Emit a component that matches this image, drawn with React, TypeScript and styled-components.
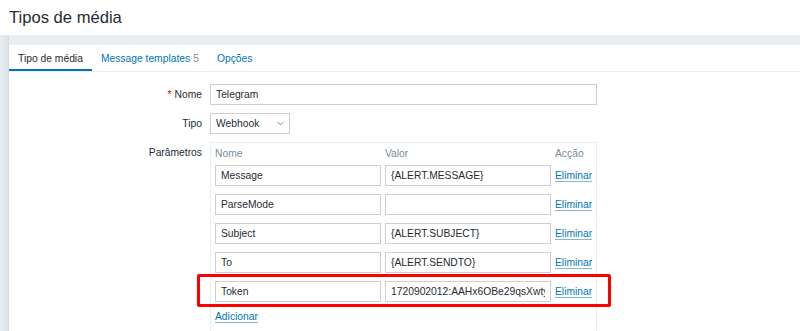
import React from "react";
import styled, { createGlobalStyle, css } from "styled-components";
import { ChevronDown } from "lucide-react";

const GlobalStyle = createGlobalStyle`
  body {
    margin: 0;
    font-family: "Liberation Sans", Arial, sans-serif;
    font-size: 10.3px;
    color: #1f2c33;
    background: #ffffff;
  }
`;

const Page = styled.div`
  height: 331px;
  overflow: hidden;
  display: flex;
  flex-direction: column;
`;

const Header = styled.header`
  height: 35px;
  display: flex;
  align-items: center;
  padding-left: 9px;
  flex-shrink: 0;
`;

const Title = styled.h1`
  margin: 0;
  font-size: 16.6px;
  font-weight: normal;
  color: #1f2c33;
`;

const Body = styled.div`
  flex: 1;
  display: flex;
`;

const Gutter = styled.div`
  width: 9px;
  flex-shrink: 0;
  background: linear-gradient(to right, #e9eef2, #dce3e9 80%, #cfd8df);
`;

const Main = styled.main`
  flex: 1;
  background: #ebeef0;
  padding-top: 10px;
  display: flex;
`;

const Panel = styled.section`
  flex: 1;
  background: #ffffff;
`;

const Tabs = styled.nav`
  display: flex;
  height: 26px;
  border-bottom: 1px solid #ebeef0;
`;

const Tab = styled.a<{ $active?: boolean }>`
  display: flex;
  align-items: center;
  padding: 0 9px;
  color: #0275b8;
  text-decoration: none;
  ${({ $active }) =>
    $active &&
    css`
      color: #1f2c33;
      box-shadow: inset 0 -2px 0 #0275b8;
    `}
`;

const Count = styled.span`
  color: #768d99;
  margin-left: 3px;
`;

const Form = styled.form`
  display: grid;
  grid-template-columns: 193px 387px;
  column-gap: 8px;
  row-gap: 8px;
  padding-top: 12px;
`;

const Label = styled.label`
  text-align: right;
  line-height: 21px;
`;

const Required = styled.span`
  color: #d40000;
  margin-right: 3px;
`;

const TextInput = styled.input`
  box-sizing: border-box;
  width: 100%;
  height: 21px;
  border: 1px solid #cfcfcf;
  padding: 0 5px;
  font-family: inherit;
  font-size: 10.3px;
  color: #1f2c33;
  background: #ffffff;
  outline: none;
`;

const Select = styled.div`
  box-sizing: border-box;
  width: 80px;
  height: 21px;
  border: 1px solid #cfcfcf;
  padding: 0 3px 0 5px;
  display: flex;
  align-items: center;
  justify-content: space-between;
  color: #1f2c33;
`;

const ParamTable = styled.div`
  border: 1px solid #ebeef0;
  padding: 3px 4px 12px;
  display: flex;
  flex-direction: column;
  gap: 8px;
`;

const ParamRow = styled.div<{ $head?: boolean }>`
  position: relative;
  display: grid;
  grid-template-columns: 166px 166px 1fr;
  column-gap: 4px;
  align-items: center;
  ${({ $head }) =>
    $head &&
    css`
      height: 14px;
      margin-bottom: -3px;
      color: #768d99;
    `}
`;

const Link = styled.a`
  color: #0275b8;
  text-decoration: underline;
  text-decoration-color: rgba(2, 117, 184, 0.5);
  text-underline-offset: 2px;
  cursor: pointer;
`;

const AddRow = styled.div`
  padding-top: 1px;
`;

const Highlight = styled.div`
  position: absolute;
  top: -7px;
  bottom: -5px;
  left: -18px;
  right: -19px;
  border: 3px solid #ff0000;
  border-radius: 2px;
  pointer-events: none;
`;

const params = [
  { name: "Message", value: "{ALERT.MESSAGE}" },
  { name: "ParseMode", value: "" },
  { name: "Subject", value: "{ALERT.SUBJECT}" },
  { name: "To", value: "{ALERT.SENDTO}" },
  { name: "Token", value: "1720902012:AAHx6OBe29qsXwty8kLmQpZr", marked: true },
];

export default function App() {
  return (
    <>
      <GlobalStyle />
      <Page>
        <Header>
          <Title>Tipos de média</Title>
        </Header>
        <Body>
          <Gutter />
          <Main>
            <Panel>
              <Tabs>
                <Tab $active>Tipo de média</Tab>
                <Tab>
                  Message templates<Count>5</Count>
                </Tab>
                <Tab>Opções</Tab>
              </Tabs>
              <Form>
                <Label>
                  <Required>*</Required>Nome
                </Label>
                <TextInput defaultValue="Telegram" />

                <Label>Tipo</Label>
                <Select>
                  Webhook
                  <ChevronDown size={11} strokeWidth={1.5} color="#555" />
                </Select>

                <Label>Parâmetros</Label>
                <ParamTable>
                  <ParamRow $head>
                    <span>Nome</span>
                    <span>Valor</span>
                    <span>Acção</span>
                  </ParamRow>
                  {params.map((p) => (
                    <ParamRow key={p.name}>
                      <TextInput defaultValue={p.name} />
                      <TextInput defaultValue={p.value} />
                      <Link>Eliminar</Link>
                      {p.marked && <Highlight />}
                    </ParamRow>
                  ))}
                  <AddRow>
                    <Link>Adicionar</Link>
                  </AddRow>
                </ParamTable>
              </Form>
            </Panel>
          </Main>
        </Body>
      </Page>
    </>
  );
}
